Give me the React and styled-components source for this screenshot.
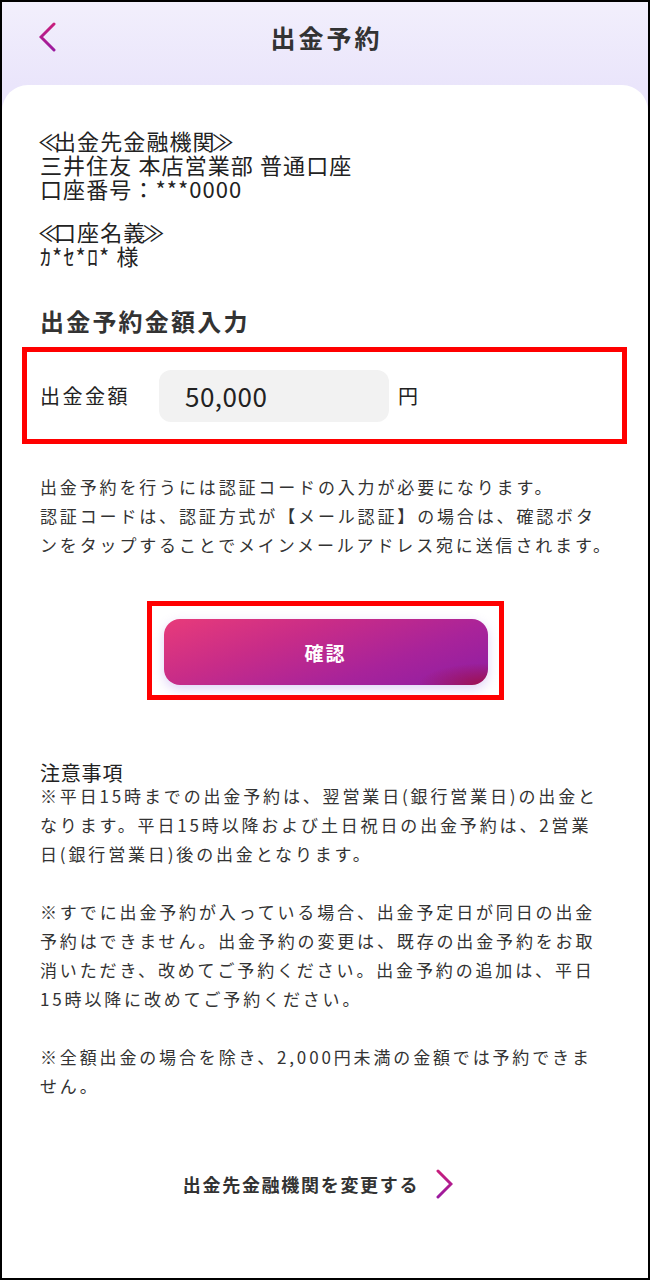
import React from 'react';
import styled, { createGlobalStyle } from 'styled-components';

const GlobalStyle = createGlobalStyle`
  html, body {
    margin: 0;
    padding: 0;
    background: #fff;
  }
  body {
    font-family: "Noto Sans CJK JP", "Noto Sans", sans-serif;
    color: #333;
  }
  * {
    box-sizing: border-box;
  }
`;

const Frame = styled.div`
  width: 650px;
  height: 1280px;
  border: 2px solid #000;
  background: linear-gradient(180deg, #f2effc 0%, #eae5fb 83px);
  display: flex;
  flex-direction: column;
  overflow: hidden;
`;

const NavBar = styled.header`
  height: 83px;
  flex-shrink: 0;
  display: grid;
  grid-template-columns: 90px 1fr 90px;
  align-items: start;
  padding-top: 18px;
`;

const BackButton = styled.button`
  background: none;
  border: 0;
  padding: 0 0 0 37px;
  height: 34px;
  display: flex;
  align-items: center;
  cursor: pointer;
`;

const PageTitle = styled.h1`
  margin: 0;
  padding-left: 3px;
  text-align: center;
  font-size: 25px;
  font-weight: 700;
  line-height: 34px;
  letter-spacing: 3px;
  color: #333;
`;

const Card = styled.main`
  flex: 1;
  background: #fff;
  border-radius: 26px 26px 0 0;
  padding: 43px 38px 0;
`;

const InfoBlock = styled.section`
  font-size: 22px;
  line-height: 24px;
  letter-spacing: 1.1px;
  color: #222;

  & + & {
    margin-top: 19px;
  }
`;

// the angle quotes are narrow in the reference font
const Quote = styled.span`
  letter-spacing: ${(p) => (p.$open ? '-6px' : '0')};
  margin-left: ${(p) => (p.$open ? '-2px' : '-4px')};
`;

const Digits = styled.span`
  letter-spacing: 1px;
`;

const SectionTitle = styled.h2`
  margin: 38px 0 10px;
  font-size: 24px;
  line-height: 32px;
  font-weight: 700;
  letter-spacing: 2.2px;
  color: #333;
`;

const Highlight = styled.div`
  border: 5px solid #ff0000;
`;

const AmountRow = styled(Highlight)`
  height: 97px;
  margin: 0 -17px 0 -18px;
  padding-left: 13px;
  display: flex;
  align-items: center;
`;

const FieldLabel = styled.label`
  width: 119px;
  font-size: 20px;
  letter-spacing: 2.5px;
  color: #222;
`;

const AmountInput = styled.input`
  width: 230px;
  height: 52px;
  border: 0;
  border-radius: 12px;
  background: #f2f2f2;
  padding: 0 0 0 26px;
  font-family: inherit;
  font-size: 26px;
  letter-spacing: 0.5px;
  color: #222;
  outline: none;
`;

const Unit = styled.span`
  margin-left: 9px;
  font-size: 20px;
  color: #222;
`;

const Body = styled.p`
  margin: ${(p) => p.$top || 0}px 0 0;
  font-size: 17px;
  line-height: 29px;
  letter-spacing: 2.85px;
  color: #333;
  white-space: nowrap;
`;

const ButtonFrame = styled(Highlight)`
  width: 357px;
  height: 99px;
  margin: 42px auto 0;
  padding: 13px 11px 10px 12px;
`;

const PrimaryButton = styled.button`
  width: 100%;
  height: 100%;
  border: 0;
  border-radius: 16px;
  background:
    radial-gradient(ellipse 70px 22px at 100% 100%, #a0104a 0%, rgba(160, 16, 74, 0) 100%),
    linear-gradient(160deg, #e83b7a 0%, #c82c88 35%, #a8239a 68%, #8e1ea3 100%);
  box-shadow: 0 4px 12px rgba(150, 110, 230, 0.3);
  color: #fff;
  font-family: inherit;
  font-size: 19px;
  font-weight: 700;
  letter-spacing: 2px;
  cursor: pointer;
`;

const NotesTitle = styled.h3`
  margin: 61px 0 -4px;
  font-size: 20px;
  font-weight: 400;
  line-height: 24px;
  letter-spacing: 0.8px;
  color: #222;
`;

const LinkRow = styled.a`
  margin-top: 68px;
  padding-right: 14px;
  display: flex;
  justify-content: center;
  align-items: center;
  gap: 16px;
  font-size: 18px;
  font-weight: 700;
  line-height: 32px;
  letter-spacing: 1.7px;
  color: #333;
  text-decoration: none;
  cursor: pointer;
`;

const Chevron = ({ dir = 'left' }) => (
  <svg width="18" height="30" viewBox="0 0 18 30" fill="none">
    <defs>
      <linearGradient id={`chev-${dir}`} x1="0" y1="0" x2="0" y2="1">
        <stop offset="0" stopColor="#c81e7c" />
        <stop offset="1" stopColor="#9a1aa0" />
      </linearGradient>
    </defs>
    <polyline
      points={dir === 'left' ? '15,2 2,15 15,28' : '3,2 16,15 3,28'}
      stroke={`url(#chev-${dir})`}
      strokeWidth="3"
      strokeLinecap="round"
      strokeLinejoin="miter"
    />
  </svg>
);

const notes = [
  [
    '※平日15時までの出金予約は、翌営業日(銀行営業日)の出金と',
    'なります。平日15時以降および土日祝日の出金予約は、2営業',
    '日(銀行営業日)後の出金となります。',
  ],
  [
    '※すでに出金予約が入っている場合、出金予定日が同日の出金',
    '予約はできません。出金予約の変更は、既存の出金予約をお取',
    '消いただき、改めてご予約ください。出金予約の追加は、平日',
    '15時以降に改めてご予約ください。',
  ],
  [
    '※全額出金の場合を除き、2,000円未満の金額では予約できま',
    'せん。',
  ],
];

const lines = (arr) =>
  arr.map((l, i) => (
    <React.Fragment key={i}>
      {i > 0 && <br />}
      {l}
    </React.Fragment>
  ));

const Heading = ({ children }) => (
  <>
    <Quote $open>≪</Quote>
    {children}
    <Quote>≫</Quote>
  </>
);

export default function App() {
  return (
    <>
      <GlobalStyle />
      <Frame>
        <NavBar>
          <BackButton aria-label="戻る">
            <Chevron dir="left" />
          </BackButton>
          <PageTitle>出金予約</PageTitle>
          <div />
        </NavBar>
        <Card>
          <InfoBlock>
            <Heading>出金先金融機関</Heading>
            <br />
            三井住友 本店営業部 普通口座
            <br />
            口座番号：<Digits>***0000</Digits>
          </InfoBlock>
          <InfoBlock>
            <Heading>口座名義</Heading>
            <br />
            ｶ*ｾ*ﾛ* 様
          </InfoBlock>

          <SectionTitle>出金予約金額入力</SectionTitle>
          <AmountRow>
            <FieldLabel htmlFor="amount">出金金額</FieldLabel>
            <AmountInput id="amount" defaultValue="50,000" readOnly />
            <Unit>円</Unit>
          </AmountRow>

          <Body $top={28}>
            {lines([
              '出金予約を行うには認証コードの入力が必要になります。',
              '認証コードは、認証方式が【メール認証】の場合は、確認ボタ',
              'ンをタップすることでメインメールアドレス宛に送信されます。',
            ])}
          </Body>

          <ButtonFrame>
            <PrimaryButton>確認</PrimaryButton>
          </ButtonFrame>

          <NotesTitle>注意事項</NotesTitle>
          {notes.map((n, i) => (
            <Body key={i} $top={i === 0 ? 0 : 29}>
              {lines(n)}
            </Body>
          ))}

          <LinkRow>
            出金先金融機関を変更する
            <Chevron dir="right" />
          </LinkRow>
        </Card>
      </Frame>
    </>
  );
}
